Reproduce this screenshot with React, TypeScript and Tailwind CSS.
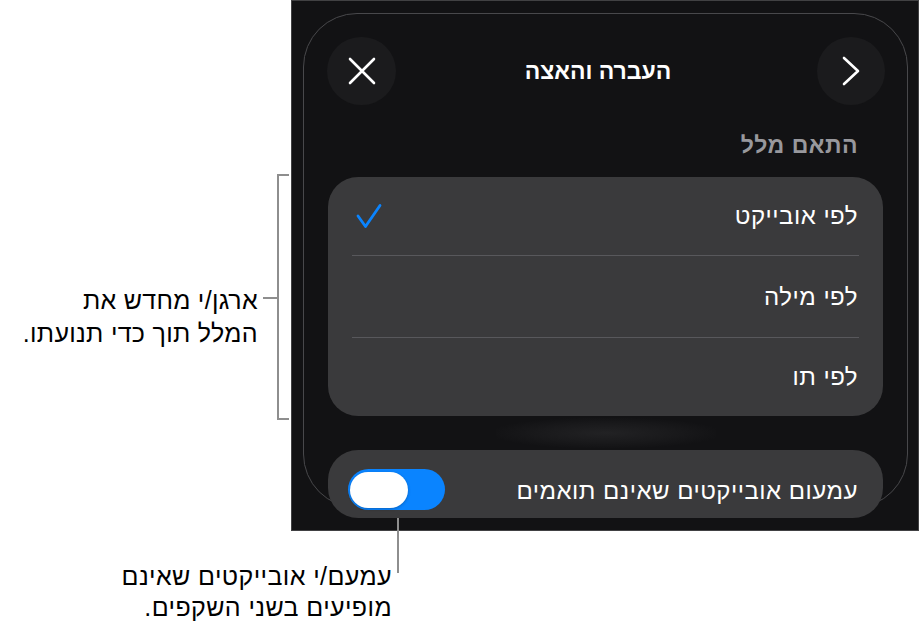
import React from "react";

function CloseIcon() {
  return (
    <svg width="28" height="28" viewBox="0 0 28 28" fill="none">
      <path d="M2 2 L26 26 M26 2 L2 26" stroke="#ffffff" strokeWidth="2.6" strokeLinecap="round" />
    </svg>
  );
}

function ChevronIcon() {
  return (
    <svg width="18" height="30" viewBox="0 0 18 30" fill="none">
      <path d="M2 2 L16 15 L2 28" stroke="#ffffff" strokeWidth="2.6" strokeLinecap="round" strokeLinejoin="round" />
    </svg>
  );
}

function CheckIcon() {
  return (
    <svg width="28" height="26" viewBox="0 0 28 26" fill="none">
      <path d="M3 13 L10.5 23.5 L25 2.5" stroke="#0a84ff" strokeWidth="2.8" strokeLinecap="round" strokeLinejoin="round" />
    </svg>
  );
}

function OptionRow({ label, checked, h }: { label: string; checked?: boolean; h: string }) {
  return (
    <div className={`flex items-center justify-between pl-[27px] pr-[25px] ${h}`}>
      <div className="w-[28px]">{checked ? <CheckIcon /> : null}</div>
      <span dir="rtl" className="text-[24px] tracking-[0.5px] text-white leading-none">
        {label}
      </span>
    </div>
  );
}

function Panel() {
  return (
    <div className="w-[628px] h-[531px] bg-[#121214] border border-[#414143] overflow-hidden">
      <div className="mt-[12px] ml-[11px] mr-[10px] rounded-[54px] border border-[#48484b] pt-[23px] px-[23px]">
        {/* header */}
        <div className="flex items-center justify-between">
          <div className="w-[69px] h-[68px] rounded-full bg-[#1b1b1d] flex items-center justify-center">
            <CloseIcon />
          </div>
          <div dir="rtl" className="mr-[17px] text-[23px] font-bold text-white leading-none">
            העברה והאצה
          </div>
          <div className="w-[68px] h-[68px] rounded-full bg-[#1b1b1d] flex items-center justify-center mr-[-1px]">
            <ChevronIcon />
          </div>
        </div>

        {/* section title */}
        <div dir="rtl" className="mt-[26px] pr-[26px] text-[23px] tracking-[0.5px] font-bold text-[#98989d] leading-[28px]">
          התאם מלל
        </div>

        {/* options list */}
        <div className="mt-[18px] mx-px rounded-[30px] bg-[#3a3a3c] overflow-hidden">
          <OptionRow label="לפי אובייקט" checked h="h-[78px]" />
          <div className="mx-[24px] h-px bg-[#58585c]" />
          <OptionRow label="לפי מילה" h="h-[81px]" />
          <div className="mx-[24px] h-px bg-[#58585c]" />
          <OptionRow label="לפי תו" h="h-[78px]" />
        </div>

        {/* faint shadow between the cards */}
        <div className="h-[34px] flex items-center justify-center">
          <div className="w-[220px] h-[30px] bg-[radial-gradient(ellipse_at_center,#222224_0%,#19191b_45%,rgba(18,18,20,0)_75%)]" />
        </div>

        {/* dim toggle */}
        <div className="relative z-10 -mb-[11px] mx-px h-[68px] rounded-[30px] bg-[#3a3a3c] flex items-start justify-between pt-[19px] pl-[20px] pr-[25px]">
          <div className="w-[97px] h-[41px] rounded-full bg-[#0a84ff] flex items-center pl-[2px]">
            <div className="w-[58px] h-[36px] rounded-full bg-white shadow-[0_1px_3px_rgba(0,0,0,0.25)]" />
          </div>
          <span dir="rtl" className="mt-[10px] text-[24px] tracking-[0.5px] text-white leading-none">
            עמעום אובייקטים שאינם תואמים
          </span>
        </div>
      </div>
    </div>
  );
}

function LeftCallout() {
  return (
    <div className="w-[291px] h-[531px] pt-[174px]">
      <div className="flex justify-end items-start pr-[2px]">
        <div dir="rtl" className="mt-[110px] mr-[5px] text-[25px] tracking-[0.3px] leading-[33px] text-black text-right">
          <div>ארגן/י מחדש את</div>
          <div>המלל תוך כדי תנועתו.</div>
        </div>
        <div className="mt-[123px] w-[14px] h-[2px] bg-[#8e8e8e]" />
        <div className="w-[12px] h-[246px] border-l-2 border-t-2 border-b-2 border-[#8e8e8e]" />
      </div>
    </div>
  );
}

export default function App() {
  return (
    <div className="relative w-[921px] h-[638px] bg-white overflow-hidden font-['Liberation_Sans','DejaVu_Sans',sans-serif]">
      <div className="flex">
        <LeftCallout />
        <Panel />
      </div>
      {/* pointer from the toggle down to its note */}
      <div className="absolute left-[397px] top-[510px] w-[2px] h-[63px] bg-[#8e8e8e]" />
      <div className="w-[392px] mt-[30px] flex justify-end">
        <div dir="rtl" className="text-[25px] tracking-[0.4px] leading-[31px] text-black text-right">
          <div>עמעם/י אובייקטים שאינם</div>
          <div>מופיעים בשני השקפים.</div>
        </div>
      </div>
    </div>
  );
}
